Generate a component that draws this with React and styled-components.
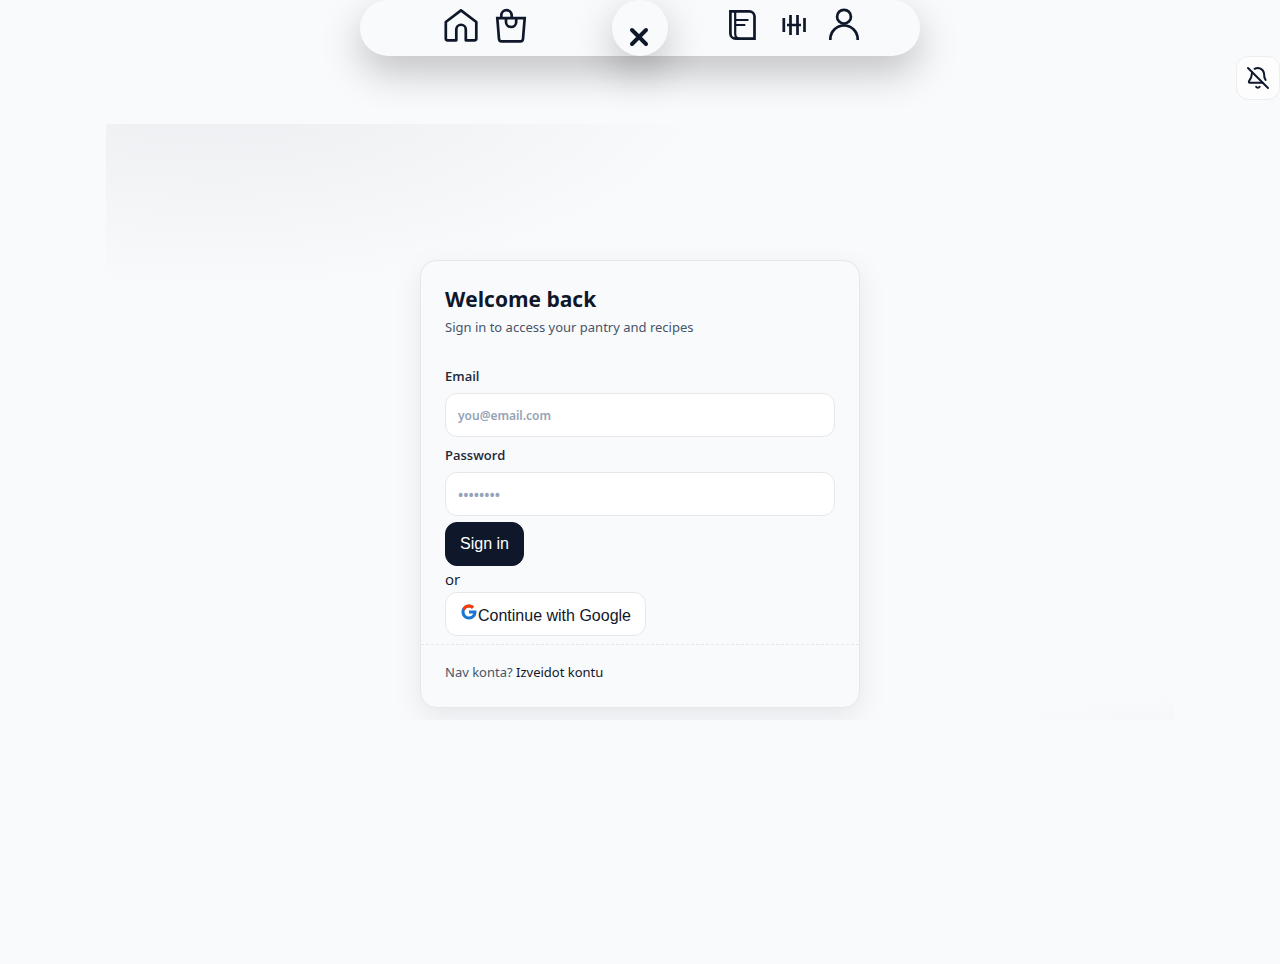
import React from "react";
import styled, { createGlobalStyle } from "styled-components";

const GlobalStyle = createGlobalStyle`
  *, *::before, *::after { box-sizing: border-box; }
  body {
    margin: 0;
    background: #f9fafc;
    color: #0f172a;
    font-family: "Segoe UI", "Open Sans", sans-serif;
    font-size: 15px;
  }
`;

const Page = styled.div`
  display: flex;
  flex-direction: column;
`;

const NavBar = styled.nav`
  display: grid;
  grid-template-columns: 1fr 56px 1fr;
  width: 100%;
  max-width: 560px;
  height: 56px;
  margin: 0 auto;
  border-radius: 28px;
  background: #f9fafc;
  box-shadow: 0 16px 40px rgba(0, 0, 0, 0.23);
`;

const NavGroup = styled.div`
  display: flex;
  justify-content: center;
  align-items: flex-start;
  gap: 14px;
  padding-top: 7px;
`;

const NavLink = styled.a`
  display: block;
  width: 36px;
  height: 36px;
  color: inherit;
`;

const CloseButton = styled.button`
  display: flex;
  justify-content: center;
  align-items: flex-end;
  width: 56px;
  height: 56px;
  padding: 0 2px 8px 0;
  border: 0;
  border-radius: 50%;
  background: #f9fafc;
  color: inherit;
  box-shadow: 0 14px 40px rgba(0, 0, 0, 0.23);
`;

const StrokeIcon = styled.svg`
  display: block;
  width: ${(p) => p.$size}px;
  height: ${(p) => p.$size}px;
  fill: none;
  stroke: currentColor;
  stroke-width: ${(p) => p.$weight || 2.7};
`;

const Toolbar = styled.div`
  display: flex;
  justify-content: flex-end;
`;

const BellButton = styled.button`
  display: flex;
  align-items: center;
  justify-content: center;
  width: 44px;
  height: 44px;
  padding: 0;
  border: 1px solid #eceef1;
  border-radius: 12px;
  background: #fdfdfe;
  color: inherit;
`;

const Main = styled.main`
  display: flex;
  justify-content: center;
  margin: 24px 106px 0;
  padding: 136px 0 12px;
  overflow: hidden;
  background:
    radial-gradient(900px 400px at 10% -10%, rgba(15, 23, 42, 0.06), transparent 57%),
    radial-gradient(930px 215px at 110% 110%, rgba(15, 23, 42, 0.04), transparent 42%);
`;

const Card = styled.section`
  width: 100%;
  max-width: 440px;
  border: 1px solid #e5e7eb;
  border-radius: 16px;
  background: #f9fafc;
  box-shadow: 0 10px 30px rgba(2, 6, 23, 0.08);
`;

const CardHeader = styled.header`
  padding: 24px 24px 0;
`;

const Title = styled.h1`
  margin: 0;
  font-size: 21px;
  line-height: 28px;
  font-weight: 700;
`;

const Subtitle = styled.p`
  margin: 4px 0 0;
  font-family: "Segoe UI", "Noto Sans", sans-serif;
  font-size: 13px;
  line-height: 21px;
  color: #475569;
`;

const Form = styled.form`
  padding: 28px 24px 8px;
`;

const Field = styled.div`
  display: flex;
  flex-direction: column;
  gap: 6px;
  margin-bottom: ${(p) => (p.$last ? 6 : 8)}px;
`;

const Label = styled.label`
  font-size: 13px;
  line-height: 21px;
  font-weight: 600;
  color: #1e293b;
`;

const Input = styled.input`
  width: 100%;
  height: 44px;
  padding: 0 12px;
  border: 1px solid #e5e7eb;
  border-radius: 12px;
  background: #fff;
  color: #0f172a;
  font: 600 12px "Segoe UI", "Noto Sans", sans-serif;
  &[type="password"] { font-size: 14px; }
  &::placeholder { color: #94a3b8; opacity: 1; }
`;

const Button = styled.button`
  display: block;
  height: 44px;
  padding: 0 14px;
  border: 1px solid ${(p) => (p.$primary ? "#0f172a" : "#e5e7eb")};
  border-radius: 12px;
  background: ${(p) => (p.$primary ? "#0f172a" : "#fff")};
  color: ${(p) => (p.$primary ? "#fff" : "#0f172a")};
  font: 16px "Liberation Sans", Arial, sans-serif;
`;

const Divider = styled.div`
  line-height: 26px;
`;

const GoogleLogo = styled.svg`
  width: 18px;
  height: 18px;
`;

const CardFooter = styled.footer`
  padding: 16px 24px 24px;
  border-top: 1px dashed #e5e7eb;
  font-family: "Segoe UI", "Noto Sans", sans-serif;
  font-size: 13px;
  line-height: 22px;
  color: #475569;
`;

const FooterLink = styled.a`
  color: #0f172a;
  text-decoration: none;
`;

const HomeIcon = () => (
  <StrokeIcon $size={36} viewBox="0 0 36 36" strokeLinejoin="round">
    <path d="M18 3.4 2.8 15v16.5a1.8 1.8 0 0 0 1.8 1.8h8.7V22.5a4.75 4.75 0 0 1 9.5 0v10.8h8.7a1.8 1.8 0 0 0 1.8-1.8V15Z" />
  </StrokeIcon>
);

const BagIcon = () => (
  <StrokeIcon $size={36} viewBox="0 0 36 36">
    <path d="M4.3 11.2h27.4l-1.7 20.8a2.6 2.6 0 0 1-2.6 2.4H8.6A2.6 2.6 0 0 1 6 32Z" />
    <path d="M8.3 11V8.3a5.2 5.2 0 0 1 10.4 0V11" />
    <path d="M13 11.5v3.4a5.1 5.1 0 0 0 10.2 0v-3.4" />
  </StrokeIcon>
);

const RecipesIcon = () => (
  <StrokeIcon $size={36} viewBox="0 0 36 36">
    <path d="M4.4 4.4h18.9a5.2 5.2 0 0 1 5.2 5.2v22H9.6a5.2 5.2 0 0 1-5.2-5.2Z" />
    <path strokeWidth="2.2" d="M9.2 4.5v22.3c0 2.7 1.2 4.8 4.3 4.8M10 13h12.5M10 18h9.3" />
  </StrokeIcon>
);

const PantryIcon = () => (
  <StrokeIcon $size={36} viewBox="0 0 36 36">
    <path d="M7.8 11v14M14.5 8v20M21.5 8v20M28.5 11v14M11 18h14" />
  </StrokeIcon>
);

const ProfileIcon = () => (
  <StrokeIcon $size={36} viewBox="0 0 36 36">
    <circle cx="18" cy="9.7" r="6.9" />
    <path d="M4.3 33v-.8a13.7 13.7 0 0 1 27.4 0v.8" />
  </StrokeIcon>
);

const BellOffIcon = () => (
  <StrokeIcon $size={24} $weight={2} viewBox="0 0 24 24" strokeLinecap="round" strokeLinejoin="round">
    <path d="M2 2l20 20" />
    <path d="M8.6 2.8A6.3 6.3 0 0 1 18 7.400c0 3.200.4 4.800 1.600 6.600" />
    <path d="M6.100 6.300c-.3 4.200-.3 5.700-3 8.700-.5.700-.2 1.700.7 1.700h12.800" />
    <path d="M10.100 20.700a2.200 2.200 0 0 0 3.600 0" />
  </StrokeIcon>
);

export default function App() {
  return (
    <>
      <GlobalStyle />
      <Page>
        <NavBar>
          <NavGroup>
            <NavLink href="#home" aria-label="Home"><HomeIcon /></NavLink>
            <NavLink href="#shopping" aria-label="Shopping"><BagIcon /></NavLink>
          </NavGroup>
          <CloseButton type="button" aria-label="Close">
            <StrokeIcon $size={22} $weight={4} viewBox="0 0 22 22" strokeLinecap="round">
              <path d="m4 4 14 14M18 4 4 18" />
            </StrokeIcon>
          </CloseButton>
          <NavGroup>
            <NavLink href="#recipes" aria-label="Recipes"><RecipesIcon /></NavLink>
            <NavLink href="#pantry" aria-label="Pantry"><PantryIcon /></NavLink>
            <NavLink href="#profile" aria-label="Profile"><ProfileIcon /></NavLink>
          </NavGroup>
        </NavBar>
        <Toolbar>
          <BellButton type="button" aria-label="Notifications off">
            <BellOffIcon />
          </BellButton>
        </Toolbar>
        <Main>
          <Card>
            <CardHeader>
              <Title>Welcome back</Title>
              <Subtitle>Sign in to access your pantry and recipes</Subtitle>
            </CardHeader>
            <Form>
              <Field>
                <Label htmlFor="email">Email</Label>
                <Input id="email" type="email" placeholder="you@email.com" />
              </Field>
              <Field $last>
                <Label htmlFor="password">Password</Label>
                <Input id="password" type="password" placeholder="••••••••" />
              </Field>
              <Button type="submit" $primary>Sign in</Button>
              <Divider>or</Divider>
              <Button type="button">
                <GoogleLogo viewBox="0 0 48 48" aria-hidden="true">
                  <path fill="#1976d2" d="M43.611,20.083H42V20H24v8h11.303c-1.649,4.657-6.08,8-11.303,8c-6.627,0-12-5.373-12-12c0-6.627,5.373-12,12-12c3.059,0,5.842,1.154,7.961,3.039l5.657-5.657C34.046,6.053,29.268,4,24,4C12.955,4,4,12.955,4,24c0,11.045,8.955,20,20,20c11.045,0,20-8.955,20-20C44,22.659,43.862,21.35,43.611,20.083z" />
                  <path fill="#ff3d00" d="M6.306,14.691l6.571,4.819C14.655,15.108,18.961,12,24,12c3.059,0,5.842,1.154,7.961,3.039l5.657-5.657C34.046,6.053,29.268,4,24,4C16.318,4,9.656,8.337,6.306,14.691z" />
                </GoogleLogo>
                Continue with Google
              </Button>
            </Form>
            <CardFooter>
              Nav konta? <FooterLink href="#register">Izveidot kontu</FooterLink>
            </CardFooter>
          </Card>
        </Main>
      </Page>
    </>
  );
}
